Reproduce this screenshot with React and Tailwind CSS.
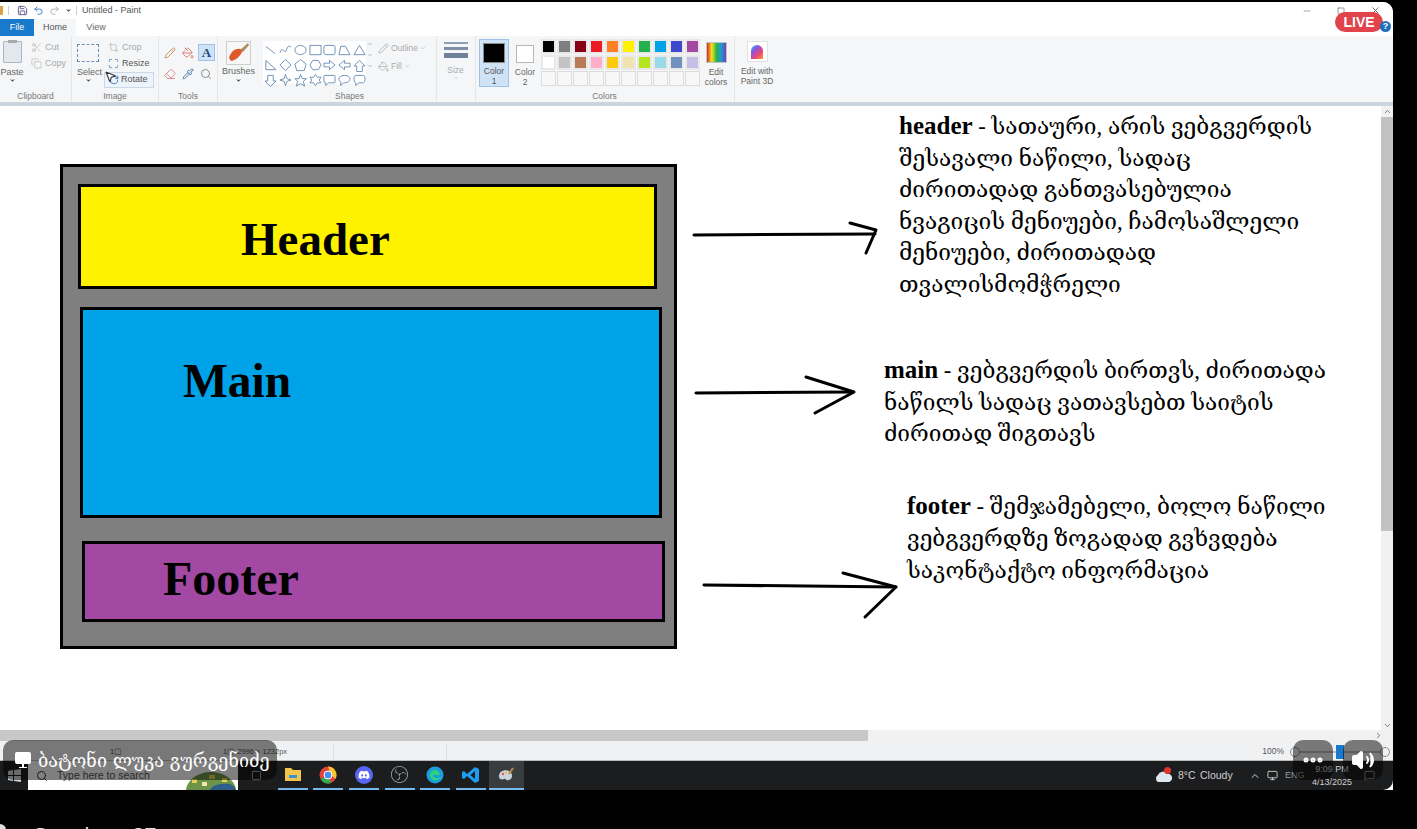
import { Scissors, Copy, Crop, Maximize, RotateCw, Pencil, PaintBucket, Eraser, Pipette, Search, Monitor, Volume2, Ellipsis, Save, Undo2, Redo2, ChevronUp, ChevronDown, ChevronRight, Minus, X, Square, MessageSquare, MousePointer2 } from 'lucide-react'
import { FaDiscord } from 'react-icons/fa'
import { SiObsstudio } from 'react-icons/si'

const paletteTop = ['bg-[#000000]', 'bg-[#7f7f7f]', 'bg-[#880015]', 'bg-[#ed1c24]', 'bg-[#ff7f27]', 'bg-[#fff200]', 'bg-[#22b14c]', 'bg-[#00a2e8]', 'bg-[#3f48cc]', 'bg-[#a349a4]']
const paletteMid = ['bg-[#ffffff]', 'bg-[#c3c3c3]', 'bg-[#b97a57]', 'bg-[#ffaec9]', 'bg-[#ffc90e]', 'bg-[#efe4b0]', 'bg-[#b5e61d]', 'bg-[#99d9ea]', 'bg-[#7092be]', 'bg-[#c8bfe7]']
const blanks = [0, 1, 2, 3, 4, 5, 6, 7, 8, 9]

const shapes = [
  'M2 2L12 10', 'M1 9C4 0 6 12 8 6S11 2 13 3', 'M1 6a6 5 0 1 0 12 0a6 5 0 1 0-12 0', 'M1 1h12v10H1z', 'M3 1h8q2 0 2 2v6q0 2-2 2H3q-2 0-2-2V3q0-2 2-2z', 'M1 11L3 2h5l5 9z', 'M7 1L13 11H1z',
  'M2 1L13 11H2z', 'M7 0L13 6L7 12L1 6z', 'M7 0L13 5L11 12H3L1 5z', 'M4 1h6l3 5l-3 5H4L1 6z', 'M1 4h6V1l6 5l-6 5V8H1z', 'M13 4H7V1L1 6l6 5V8h6z', 'M4 13V7H1l6-6l6 6h-3v6z',
  'M4 1v6H1l6 6l6-6h-3V1z', 'M7 0l1.5 4.5L13 6L8.5 7.5L7 12L5.5 7.5L1 6L5.5 4.5z', 'M7 0l2 4.5h4.5L10 7.5l1.5 5L7 10l-4.5 2.5l1.5-5L1 4.5h4.5z', 'M7 0l2 3h4l-2 3l2 3H9l-2 3l-2-3H1l2-3l-2-3h4z', 'M2 1h10q1 0 1 1v6q0 1-1 1H6l-3 3V9H2q-1 0-1-1V2q0-1 1-1z', 'M7 1c8 0 8 8 0 8H6l-3 3V8C-1 6 1 1 7 1z', 'M3 1h8q2 0 2 4t-2 4H6l-3 3V9Q1 9 1 5t2-4z',
]

function SmallTool({ icon: Icon, label, muted }) {
  return (
    <div className={`flex items-center gap-[3px] h-[13px] text-[9px] ${muted ? 'text-[#a8a8a8]' : 'text-[#555]'}`}>
      <Icon size={11} strokeWidth={1.4} className={muted ? 'text-[#b0b0b0]' : 'text-[#2b6cb0]'} />
      <span>{label}</span>
    </div>
  )
}

function Group({ label, className, children }) {
  return (
    <div className={`flex flex-col border-r border-[#e4e6e8] ${className}`}>
      <div className="flex-1 flex min-h-0">{children}</div>
      <div className="h-[12px] text-center text-[8.5px] leading-[12px] text-[#777]">{label}</div>
    </div>
  )
}

function Ribbon() {
  return (
    <div className="relative flex h-[66px] bg-[#f5f6f7] font-['Liberation_Sans',sans-serif]">
      <Group label="Clipboard" className="w-[72px]">
        <div className="w-[24px] flex flex-col items-center pt-[5px]">
          <div className="relative w-[19px] h-[22px] border border-[#a9b6c6] bg-[#e3e8ef] rounded-[1px]">
            <div className="absolute -top-[2px] left-[4px] w-[9px] h-[3px] bg-[#a9a9a9]" />
          </div>
          <span className="text-[9px] text-[#666] mt-[4px] leading-[10px]">Paste</span>
          <ChevronDown size={7} className="text-[#555] fill-[#555]" />
        </div>
        <div className="flex flex-col gap-[3px] pt-[5px] pl-[7px]">
          <SmallTool icon={Scissors} label="Cut" muted />
          <SmallTool icon={Copy} label="Copy" muted />
        </div>
      </Group>
      <Group label="Image" className="w-[87px]">
        <div className="w-[32px] pl-[5px] flex flex-col items-start pt-[8px]">
          <div className="w-[22px] h-[18px] border border-dashed border-[#6f8fb4]" />
          <span className="text-[9px] text-[#666] mt-[5px] leading-[10px]">Select</span>
          <ChevronDown size={7} className="ml-[8px] text-[#555] fill-[#555]" />
        </div>
        <div className="flex flex-col gap-[3px] pt-[5px]">
          <div className="pl-[4px]"><SmallTool icon={Crop} label="Crop" muted /></div>
          <div className="pl-[4px]"><SmallTool icon={Maximize} label="Resize" /></div>
          <div className="w-[50px] h-[16px] -mt-px flex items-center gap-[2px] pl-[4px] text-[9px] text-[#555] bg-[#edf3fa] border border-[#c9d9ea]">
            <RotateCw size={10} className="text-[#2b6cb0]" />
            <span>Rotate</span>
          </div>
        </div>
      </Group>
      <Group label="Tools" className="w-[59px]">
        <div className="grid grid-cols-3 gap-x-px gap-y-[4px] pl-[3px] pt-[8px] h-fit">
          <div className="w-[16px] h-[17px] flex items-center justify-center"><Pencil size={12} className="text-[#c9925a]" /></div>
          <div className="w-[16px] h-[17px] flex items-center justify-center"><PaintBucket size={12} className="text-[#d9816e]" /></div>
          <div className="w-[17px] h-[17px] flex items-center justify-center bg-[#cfe3f7] border border-[#9fc2e6] font-['Liberation_Serif',serif] font-bold text-[13px] leading-none text-[#274c77]">A</div>
          <div className="w-[16px] h-[17px] flex items-center justify-center"><Eraser size={12} className="text-[#e08a95]" /></div>
          <div className="w-[16px] h-[17px] flex items-center justify-center"><Pipette size={12} className="text-[#4a78a8]" /></div>
          <div className="w-[16px] h-[17px] flex items-center justify-center"><Search size={12} className="text-[#8c8c8c]" /></div>
        </div>
      </Group>
      <Group label="" className="w-[41px] border-r-0">
        <div className="w-full flex flex-col items-center pt-[5px]">
          <svg width="25" height="24" viewBox="0 0 25 24">
            <rect x="0.5" y="0.5" width="24" height="23" fill="#f7f7f7" stroke="#cfcfcf" />
            <path d="M3 17C5 9 12 6 17 9C15 14 11 19 5 20z" fill="#dd5a2b" />
            <path d="M14 9L22 2L23 4L17 11z" fill="#b08a62" />
          </svg>
          <span className="text-[9px] text-[#666] mt-[1px] leading-[11px]">Brushes</span>
          <ChevronDown size={7} className="text-[#555] fill-[#555]" />
        </div>
      </Group>
      <Group label="Shapes" className="w-[178px] pl-[4px]">
        <div className="mt-[5px] w-[103px] h-[43px] bg-white grid grid-cols-7 content-start gap-x-[2px] pt-[3px] pl-px gap-y-[2px]">
          {shapes.map((d, i) => (
            <svg key={i} width="13" height="13" viewBox="0 0 14 13" fill="none" stroke="#6b8db3" strokeWidth="1">
              <path d={d} />
            </svg>
          ))}
        </div>
        <div className="w-[8px] mt-[5px] flex flex-col items-center gap-[5px] text-[#888]">
          <Minus size={6} /><ChevronDown size={6} /><ChevronDown size={6} />
        </div>
        <div className="flex flex-col gap-[5px] pt-[6px] pl-[4px]">
          <div className="flex items-center gap-[2px] text-[8.5px] text-[#aaa]"><Pencil size={11} className="text-[#b7b7b7]" />Outline<ChevronDown size={6} /></div>
          <div className="flex items-center gap-[2px] text-[8.5px] text-[#aaa]"><PaintBucket size={11} className="text-[#b7b7b7]" />Fill<ChevronDown size={6} /></div>
        </div>
      </Group>
      <div className="w-[40px] ml-[-1px] flex flex-col items-center pt-[6px] border-r border-[#e4e6e8]">
        <div className="w-[24px] h-[2px] bg-[#8d9db2]" />
        <div className="w-[24px] h-[3px] bg-[#7d8ea6] mt-[3px]" />
        <div className="w-[24px] h-[5px] bg-[#6f8099] mt-[3px]" />
        <span className="text-[8.5px] text-[#aaa] mt-[7px] leading-[10px]">Size</span>
        <ChevronDown size={6} className="text-[#bbb]" />
      </div>
      <div className="flex flex-col ml-[2px]">
        <div className="flex flex-1 pt-[3px]">
          <div className="w-[30px] h-[48px] ml-px flex flex-col items-center pt-[3px] bg-[#cfe3f7] border border-[#9fc2e6]">
            <div className="w-[22px] h-[22px] bg-black border border-[#8a8a8a]" />
            <span className="text-[8.5px] text-[#555] leading-[10px] mt-[3px] text-center">Color<br />1</span>
          </div>
          <div className="w-[30px] h-[48px] ml-px flex flex-col items-center pt-[6px]">
            <div className="w-[18px] h-[18px] bg-white border border-[#b8b8b8]" />
            <span className="text-[8.5px] text-[#666] leading-[10px] mt-[4px] text-center">Color<br />2</span>
          </div>
          <div className="ml-[1px] grid grid-cols-10 gap-px h-fit">
            {paletteTop.map((c, i) => <div key={i} className={`w-[15px] h-[15px] border-2 border-[#e8e8e8] ${c}`} />)}
            {paletteMid.map((c, i) => <div key={i} className={`w-[15px] h-[15px] border-2 border-[#e8e8e8] ${c}`} />)}
            {blanks.map((i) => <div key={i} className="w-[15px] h-[15px] border border-[#dcdcdc] bg-[#f7f7f7]" />)}
          </div>
          <div className="w-[30px] ml-px flex flex-col items-center pt-[3px]">
            <div className="w-[21px] h-[21px] border border-[#c4c4c4] bg-[linear-gradient(90deg,#d8262c,#f6e516,#2bb24c,#1c9ad6,#7a3fb0)]" />
            <span className="text-[8.5px] text-[#666] leading-[10px] mt-[4px] text-center">Edit<br />colors</span>
          </div>
        </div>
        <div className="h-[12px] text-center text-[8.5px] leading-[12px] text-[#777]">Colors</div>
      </div>
      <div className="w-[45px] border-l border-[#e4e6e8] ml-[3px] flex flex-col items-center pt-[5px]">
        <div className="w-[21px] h-[21px] bg-white border border-[#e2e2e2] flex items-center justify-center">
          <div className="w-[12px] h-[14px] rounded-t-full rounded-b-[6px] bg-[linear-gradient(135deg,#2ec4d6,#8a55e0,#f0466e,#f59e2f)]" />
        </div>
        <span className="text-[8.5px] text-[#666] leading-[10px] mt-[4px] text-center whitespace-nowrap">Edit with<br />Paint 3D</span>
      </div>
      <MousePointer2 size={13} className="absolute left-[104px] top-[34px] text-[#333] fill-white" />
    </div>
  )
}

function Diagram() {
  return (
    <div className="relative flex-1 bg-white overflow-hidden font-['Liberation_Serif','DejaVu_Serif',serif] text-black">
      <div className="absolute left-[60px] top-[58px] w-[617px] h-[485px] bg-[#7f7f7f] border-[3px] border-black">
        <div className="absolute left-[15px] top-[17px] w-[579px] h-[105px] bg-[#fff200] border-[3px] border-black flex items-center pl-[160px]">
          <span className="text-[47px] font-bold pt-[5px]">Header</span>
        </div>
        <div className="absolute left-[17px] top-[140px] w-[582px] h-[211px] bg-[#00a2e8] border-[3px] border-black pl-[100px] pt-[41px]">
          <span className="text-[47.5px] font-bold leading-[60px]">Main</span>
        </div>
        <div className="absolute left-[19px] top-[374px] w-[583px] h-[81px] bg-[#a349a4] border-[3px] border-black pl-[78px] flex items-center">
          <span className="text-[48px] font-bold pb-[6px]">Footer</span>
        </div>
      </div>

      <svg className="absolute left-[680px] top-[100px]" width="230" height="430" viewBox="0 0 230 430" fill="none" stroke="#000" strokeWidth="3" strokeLinecap="round" strokeLinejoin="round">
        <path d="M14 29L195 28" />
        <path d="M170 17L196 24L186 47" />
        <path d="M16 187L172 186" />
        <path d="M126 171L174 186L135 207" />
        <path d="M24 379L216 381" />
        <path d="M163 367L216 381L185 411" />
      </svg>

      <div className="absolute left-[899px] top-[4px] w-[440px] text-[22.7px] leading-[31.5px] whitespace-nowrap">
        <b className="text-[25px]">header</b> - სათაური, არის ვებგვერდის<br />
        შესავალი ნაწილი, სადაც<br />
        ძირითადად განთვასებულია<br />
        ნვაგიცის მენიუები, ჩამოსაშლელი<br />
        მენიუები, ძირითადად<br />
        თვალისმომჭრელი
      </div>
      <div className="absolute left-[884px] top-[248px] w-[460px] text-[22.7px] leading-[31.5px] whitespace-nowrap">
        <b className="text-[25px]">main</b> - ვებგვერდის ბირთვს, ძირითადა<br />
        ნაწილს სადაც ვათავსებთ საიტის<br />
        ძირითად შიგთავს
      </div>
      <div className="absolute left-[907px] top-[384px] w-[440px] text-[22.7px] leading-[32px] whitespace-nowrap">
        <b className="text-[25px]">footer</b> - შემჯამებელი, ბოლო ნაწილი<br />
        ვებგვერდზე ზოგადად გვხვდება<br />
        საკონტაქტო ინფორმაცია
      </div>
    </div>
  )
}

function TaskIcon({ children }) {
  return (
    <div className="w-[30px] mx-[2.8px] h-full flex items-center justify-center border-b-2 border-[#76b9ed]">
      {children}
    </div>
  )
}

function Taskbar() {
  return (
    <div className="flex items-center h-[29px] bg-[#1c1d1e] rounded-br-[10px] overflow-hidden font-['Liberation_Sans',sans-serif]">
      <div className="w-[28px] flex justify-center">
        <svg width="13" height="13" viewBox="0 0 13 13" fill="#cfd3d6"><path d="M0 2l5-1v5H0zM6 1l7-1v6H6zM0 7h5v5l-5-1zM6 7h7v6l-7-1z" /></svg>
      </div>
      <div className="w-[210px] h-full bg-white flex items-center pl-[8px] gap-[9px] text-[10.5px] text-[#555] relative overflow-hidden">
        <Search size={12} className="text-[#333]" />
        <span>Type here to search</span>
        <svg className="absolute right-0 bottom-0" width="54" height="19" viewBox="0 0 54 19">
          <path d="M2 19C3 9 14 1 27 1s24 8 25 18z" fill="#6d9448" />
          <path d="M26 19c2-5 10-7 20-6c3 1 5 3 6 6z" fill="#2d5f8a" />
          <rect x="8" y="8" width="5" height="4" fill="#e8cf5a" />
          <rect x="18" y="11" width="5" height="4" fill="#efe7b0" />
          <rect x="25" y="4" width="6" height="4" fill="#e8cf5a" />
          <rect x="38" y="7" width="5" height="4" fill="#e8cf5a" />
        </svg>
      </div>
      <div className="w-[37px] flex justify-center text-[#aaa]"><Square size={11} /></div>
      <div className="flex h-full items-stretch">
        <TaskIcon>
          <svg width="18" height="15" viewBox="0 0 18 15"><path d="M1 1h6l2 2h8v11H1z" fill="#f3c64b" /><path d="M5 8h8v3H5z" fill="#3a8fd6" /></svg>
        </TaskIcon>
        <TaskIcon>
          <svg width="18" height="18" viewBox="0 0 18 18">
            <circle cx="9" cy="9" r="8.5" fill="#e0433a" />
            <path d="M9 9L1.6 13.3A8.5 8.5 0 0 0 12 17z" fill="#34a853" />
            <path d="M9 .5A8.5 8.5 0 0 1 16.5 13L12 9z" fill="#f9c52d" />
            <circle cx="9" cy="9" r="4" fill="#4a8df0" stroke="#fff" />
          </svg>
        </TaskIcon>
        <TaskIcon>
          <div className="w-[18px] h-[18px] rounded-full bg-[#5865f2] flex items-center justify-center text-white">
            <FaDiscord size={12} />
          </div>
        </TaskIcon>
        <TaskIcon>
          <SiObsstudio size={17} className="text-[#a9a9a9]" />
        </TaskIcon>
        <TaskIcon>
          <svg width="18" height="18" viewBox="0 0 18 18"><circle cx="9" cy="9" r="8.5" fill="#1a9ede" /><path d="M4 9a5 5 0 0 1 10 0H7c0 3 4 4 8 2c-2 5-11 5-11-2z" fill="#2fd07f" /></svg>
        </TaskIcon>
        <TaskIcon>
          <svg width="18" height="18" viewBox="0 0 18 18"><path d="M13 1l4 2v12l-4 2L5 10l-3 3l-2-1V6l2-1l3 3zM13 5L8.5 9L13 13z" fill="#1f9cf0" /></svg>
        </TaskIcon>
        <div className="w-[35.6px] h-full flex items-center justify-center bg-[#3a3d40] border-b-2 border-[#76b9ed]">
          <svg width="18" height="18" viewBox="0 0 18 18"><path d="M2 10C2 5 8 3 12 5s4 8 0 9s-3-2-5-1s-5 1-5-3z" fill="#c8d3dd" /><circle cx="6" cy="8" r="1.2" fill="#e25c4a" /><circle cx="9" cy="7" r="1.2" fill="#f3c64b" /><path d="M12 8L16 2" stroke="#b98a4f" strokeWidth="2" /></svg>
        </div>
      </div>
      <div className="flex-1" />
      <div className="flex items-center text-[10.5px] text-[#cfcfcf] pr-[18px]">
        <div className="relative mr-[6px]">
          <svg width="18" height="12" viewBox="0 0 18 12"><path d="M4 12a4 4 0 0 1 0-7a5 5 0 0 1 9-1a4 4 0 0 1 2 8z" fill="#dfe7f0" /></svg>
          <div className="absolute -top-[3px] right-[1px] w-[7px] h-[7px] rounded-full bg-[#e0342f]" />
        </div>
        <span className="w-[21px]">8°C</span>
        <span className="w-[46px] ml-px">Cloudy</span>
        <ChevronUp size={12} className="ml-[3px]" />
        <Monitor size={11} className="ml-[6px]" />
        <span className="ml-[7px] w-[22px] text-[9px] text-[#999]">ENG</span>
        <div className="w-[50px] text-center text-[9px] leading-[13px]">9:09 PM<br />4/13/2025</div>
        <MessageSquare size={11} className="ml-[7px] text-[#999]" />
      </div>
    </div>
  )
}

export default function App() {
  return (
    <div className="relative w-[1417px] h-[829px] bg-black overflow-hidden">
      <div className="pt-[2px] w-[1393px]">
        <div className="h-[788px] flex flex-col bg-white rounded-tr-[10px] overflow-hidden">
          <div className="h-[17px] flex items-center bg-white font-['Liberation_Sans',sans-serif] text-[9px] text-[#555]">
            <div className="w-[3px] h-[9px] bg-[#d9a441] mr-[5px]" />
            <div className="w-px h-[9px] bg-[#ccc] mr-[8px]" />
            <Save size={11} className="text-[#5d4e8c] mr-[5px]" />
            <Undo2 size={11} className="text-[#2f78c4] mr-[5px]" />
            <Redo2 size={11} className="text-[#aaa] mr-[5px]" />
            <ChevronDown size={7} className="text-[#444] fill-[#444] mr-[4px]" />
            <div className="w-px h-[9px] bg-[#ccc] mr-[5px]" />
            <span>Untitled - Paint</span>
            <div className="flex-1" />
            <Minus size={10} className="text-[#999]" />
            <Square size={8} className="text-[#666] ml-[25px]" />
            <X size={11} className="text-[#666] ml-[25px] mr-[12px]" />
          </div>
          <div className="h-[17px] flex items-stretch bg-white font-['Liberation_Sans',sans-serif] text-[9px]">
            <div className="w-[34px] bg-[#1979ca] text-white flex items-center justify-center">File</div>
            <div className="w-[42px] bg-[#f5f6f7] text-[#555] flex items-center justify-center">Home</div>
            <div className="w-[40px] text-[#666] flex items-center justify-center">View</div>
          </div>
          <Ribbon />
          <div className="h-[4px] bg-[#ccd4de]" />
          <div className="flex-1 flex min-h-0">
            <Diagram />
            <div className="w-[12px] bg-[#f1f1f1] flex flex-col items-center">
              <ChevronUp size={9} className="text-[#555] my-px" />
              <div className="w-full h-[414px] bg-[#c2c2c2]" />
              <div className="flex-1" />
              <ChevronDown size={9} className="text-[#555]" />
            </div>
          </div>
          <div className="h-[11px] bg-[#f1f1f1] flex items-center">
            <div className="w-[868px] h-full bg-[#c8c8c8]" />
            <div className="flex-1" />
            <ChevronRight size={9} className="text-[#555] mr-[10px]" />
          </div>
          <div className="h-[20px] pt-[2px] bg-[#f0f1f2] flex items-center font-['Liberation_Sans',sans-serif] text-[7.5px] text-[#555] border-b border-[#bbb]">
            <span className="ml-[110px] w-[113px]">1▢</span>
            <span className="w-[110px]">1▢ 2996 × 1232px</span>
            <div className="w-[114px] h-full border-x border-[#dfe0e1]" />
            <div className="flex-1" />
            <span className="text-[8.5px]">100%</span>
            <div className="w-[10px] h-[10px] ml-[6px] rounded-full border border-[#888]" />
            <div className="relative w-[80px] h-[2px] bg-[#bbb]">
              <div className="absolute left-[36px] -top-[6px] w-[8px] h-[14px] bg-[#1979ca]" />
            </div>
            <div className="w-[10px] h-[10px] mr-[3px] rounded-full border border-[#888]" />
          </div>
          <Taskbar />
        </div>
      </div>

      <div className="absolute left-0 top-[821px] flex items-start text-[#dddddd] text-[22px] leading-[30px] font-['Liberation_Sans',sans-serif]">
        <span className="ml-[-6px] mt-[3px] w-[12px] h-[12px] rounded-full bg-[#dddddd]" />
        <span className="ml-[27px]">Speakers 27</span>
      </div>

      <div className="absolute left-[1335px] top-[12px] w-[48px] h-[20px] rounded-full bg-[#e0434c] flex items-center justify-center text-white text-[14px] font-bold font-['Liberation_Sans',sans-serif]">LIVE</div>
      <div className="absolute left-[1380px] top-[21px] w-[11px] h-[11px] rounded-full bg-[#1f6fc0] flex items-center justify-center text-white text-[9px] font-bold font-['Liberation_Sans',sans-serif]">?</div>

      <div className="absolute left-[3px] top-[740px] h-[40px] w-[274px] rounded-[10px] bg-black/50 flex items-center pl-[11px] gap-[6px] text-white text-[18px] font-['DejaVu_Serif','DejaVu_Sans',serif]">
        <svg className="shrink-0" width="18" height="18" viewBox="0 0 18 18" fill="#fff"><rect x="1" y="1" width="16" height="12" rx="2" /><path d="M8 13h2v3h3v1H5v-1h3z" /></svg>
        <span className="whitespace-nowrap">ბატონი ლუკა გურგენიძე</span>
      </div>
      <div className="absolute left-[1293px] top-[740px] w-[40px] h-[40px] rounded-[10px] bg-black/50 flex items-center justify-center text-white">
        <Ellipsis size={24} strokeWidth={3} />
      </div>
      <div className="absolute left-[1343px] top-[740px] w-[40px] h-[40px] rounded-[10px] bg-black/50 flex items-center justify-center text-white">
        <Volume2 size={24} fill="#fff" />
      </div>
    </div>
  )
}
